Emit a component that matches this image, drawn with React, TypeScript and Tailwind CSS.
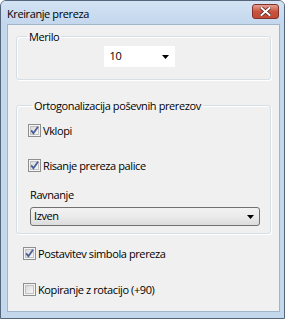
import React from "react";

const font = { fontFamily: '"Open Sans", "Noto Sans", sans-serif', letterSpacing: "-0.4px" };

function Check({ checked }: { checked?: boolean }) {
  return (
    <svg width="13" height="13" viewBox="0 0 13 13" className="shrink-0">
      <defs>
        <linearGradient id="cbg" x1="0" y1="0" x2="1" y2="1">
          <stop offset="0" stopColor="#d8d8d8" />
          <stop offset="1" stopColor="#f8f8f8" />
        </linearGradient>
      </defs>
      <rect x="0.5" y="0.5" width="12" height="12" fill="#f4f4f4" stroke="#8e8f8f" />
      <rect x="2.5" y="2.5" width="8" height="8" fill="url(#cbg)" stroke="#c2c2c2" />
      {checked && (
        <path d="M3.2 6.4 L5.4 9.2 L10 2.8" fill="none" stroke="#4a5f97" strokeWidth="1.8" />
      )}
    </svg>
  );
}

function CheckRow({ label, checked }: { label: string; checked?: boolean }) {
  return (
    <div className="flex items-center gap-[2px] h-[15px] text-[11px] text-black">
      <Check checked={checked} />
      <span className="leading-[15px]">{label}</span>
    </div>
  );
}

function Arrow() {
  return (
    <svg width="7" height="4" viewBox="0 0 7 4">
      <path d="M0 0 H7 L3.5 4 Z" fill="#000" />
    </svg>
  );
}

function Group({ title, className, children }: { title: string; className?: string; children: React.ReactNode }) {
  return (
    <fieldset
      className={`border border-[#d5dfe5] rounded-[3px] shadow-[inset_1px_1px_0_#fff,1px_1px_0_#fff] ${className ?? ""}`}
    >
      <legend className="ml-[4px] px-[2px] text-[11px] leading-[15px] text-black">{title}</legend>
      {children}
    </fieldset>
  );
}

export default function App() {
  return (
    <div
      style={font}
      className="w-[285px] h-[319px] flex flex-col bg-[#c3d7ed] border border-[#55667c] rounded-t-[6px] overflow-hidden"
    >
      {/* title bar */}
      <div className="h-[23px] flex items-start justify-between pl-[6px] pr-[5px] bg-gradient-to-b from-[#d3e3f4] to-[#c3d7ed]">
        <span className="mt-[5px] text-[11px] leading-[15px] text-black">Kreiranje prereza</span>
        <div className="mt-[3px] w-[27px] h-[15px] rounded-[3px] border border-[#83322b] bg-gradient-to-b from-[#e4a193] via-[#c9533f] to-[#c24a38] flex items-center justify-center">
          <svg width="11" height="9" viewBox="0 0 11 9">
            <path d="M1.5 1 L9.5 8 M9.5 1 L1.5 8" stroke="#5a1d16" strokeWidth="3.4" strokeLinecap="square" />
            <path d="M1.5 1 L9.5 8 M9.5 1 L1.5 8" stroke="#fff" strokeWidth="2" strokeLinecap="square" />
          </svg>
        </div>
      </div>

      {/* client */}
      <div className="ml-[6px] mr-[4px] mb-[6px] flex-1 bg-[#f0f0f0] border border-[#a0b4cb] px-[8px] pt-[4px] flex flex-col">
        <Group title="Merilo" className="h-[51px] px-[6px] pt-[2px]">
          <div className="flex justify-center">
            <div className="ml-[-9px] w-[71px] h-[21px] bg-white flex items-center justify-between pl-[6px] pr-[6px] text-[11px] text-black">
              <span>10</span>
              <Arrow />
            </div>
          </div>
        </Group>

        <Group title="Ortogonalizacija poševnih prerezov" className="mt-[18px] h-[136px] pl-[11px] pr-[10px]">
          <div className="pt-[10px] flex flex-col">
            <CheckRow label="Vklopi" checked />
            <div className="mt-[20px]">
              <CheckRow label="Risanje prereza palice" checked />
            </div>
            <div className="mt-[14px] ml-[2px] text-[11px] leading-[15px] text-black">Ravnanje</div>
            <div className="mt-[5px] ml-[2px] h-[19px] rounded-[3px] border border-[#707070] bg-gradient-to-b from-[#f2f2f2] via-[#ebebeb] to-[#dcdcdc] flex items-center justify-between pl-[3px] pr-[5px] text-[11px] text-black">
              <span>Izven</span>
              <Arrow />
            </div>
          </div>
        </Group>

        <div className="mt-[12px] ml-[7px] flex flex-col">
          <CheckRow label="Postavitev simbola prereza" checked />
          <div className="mt-[21px]">
            <CheckRow label="Kopiranje z rotacijo (+90)" />
          </div>
        </div>
      </div>
    </div>
  );
}
